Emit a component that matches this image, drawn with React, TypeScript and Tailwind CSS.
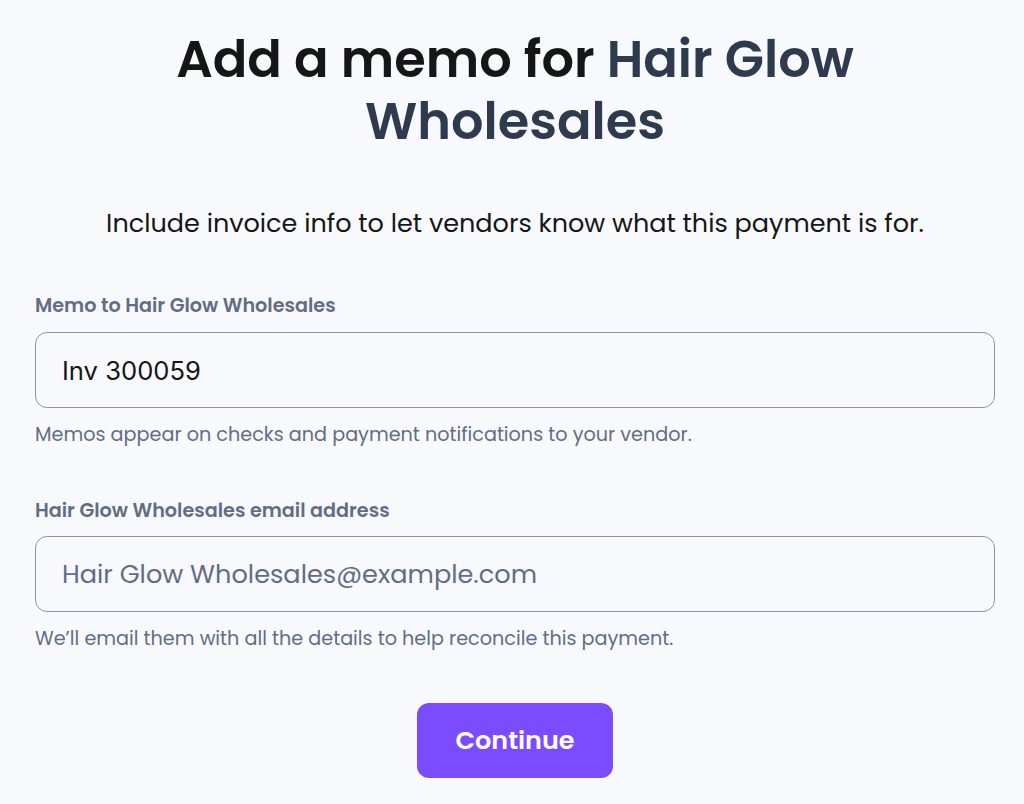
import React, { useState } from 'react';

const App: React.FC = () => {
  const [memo, setMemo] = useState('Inv 300059');
  const [email, setEmail] = useState('');

  return (
    <div className="min-h-[804px] bg-[#f8f9fd] font-['Poppins',sans-serif]">
      <div className="ml-[35px] w-[960px] pt-[28px] flex flex-col">
        {/* title wraps after "Glow" */}
        <h1 className="text-center text-[51px] leading-[62px] font-semibold text-[#161616] px-[120px]">
          Add a memo for <span className="text-[#2e3a4e]">Hair Glow Wholesales</span>
        </h1>

        <p className="mt-[53px] text-center text-[25.5px] leading-[36px] text-[#161616]">
          Include invoice info to let vendors know what this payment is for.
        </p>

        <div className="mt-[51px] flex flex-col">
          <label className="text-[19.2px] leading-[28px] font-semibold text-[#626d85]">
            Memo to Hair Glow Wholesales
          </label>
          <input
            type="text"
            value={memo}
            onChange={(e) => setMemo(e.target.value)}
            className="mt-[12px] h-[76px] w-full px-[26px] rounded-[12px] border border-[#8a95aa] bg-transparent text-[25.6px] text-[#161616] font-['Inter',sans-serif] outline-none"
          />
          <p className="mt-[13px] text-[19.2px] leading-[28px] text-[#626d85]">
            Memos appear on checks and payment notifications to your vendor.
          </p>
        </div>

        <div className="mt-[48px] flex flex-col">
          <label className="text-[19.2px] leading-[28px] font-semibold text-[#626d85]">
            Hair Glow Wholesales email address
          </label>
          <input
            type="email"
            value={email}
            placeholder="Hair Glow Wholesales@example.com"
            onChange={(e) => setEmail(e.target.value)}
            className="mt-[11px] h-[76px] w-full px-[26px] rounded-[12px] border border-[#8a95aa] bg-transparent text-[25.6px] text-[#161616] placeholder:text-[#626d85] outline-none"
          />
          <p className="mt-[13px] text-[19.2px] leading-[28px] text-[#626d85]">
            We’ll email them with all the details to help reconcile this payment.
          </p>
        </div>

        <div className="mt-[50px] flex justify-center">
          <button className="w-[196px] h-[75px] rounded-[12px] bg-[#7b4cff] text-white text-[25.5px] font-semibold">
            Continue
          </button>
        </div>
      </div>
    </div>
  );
};

export default App;
